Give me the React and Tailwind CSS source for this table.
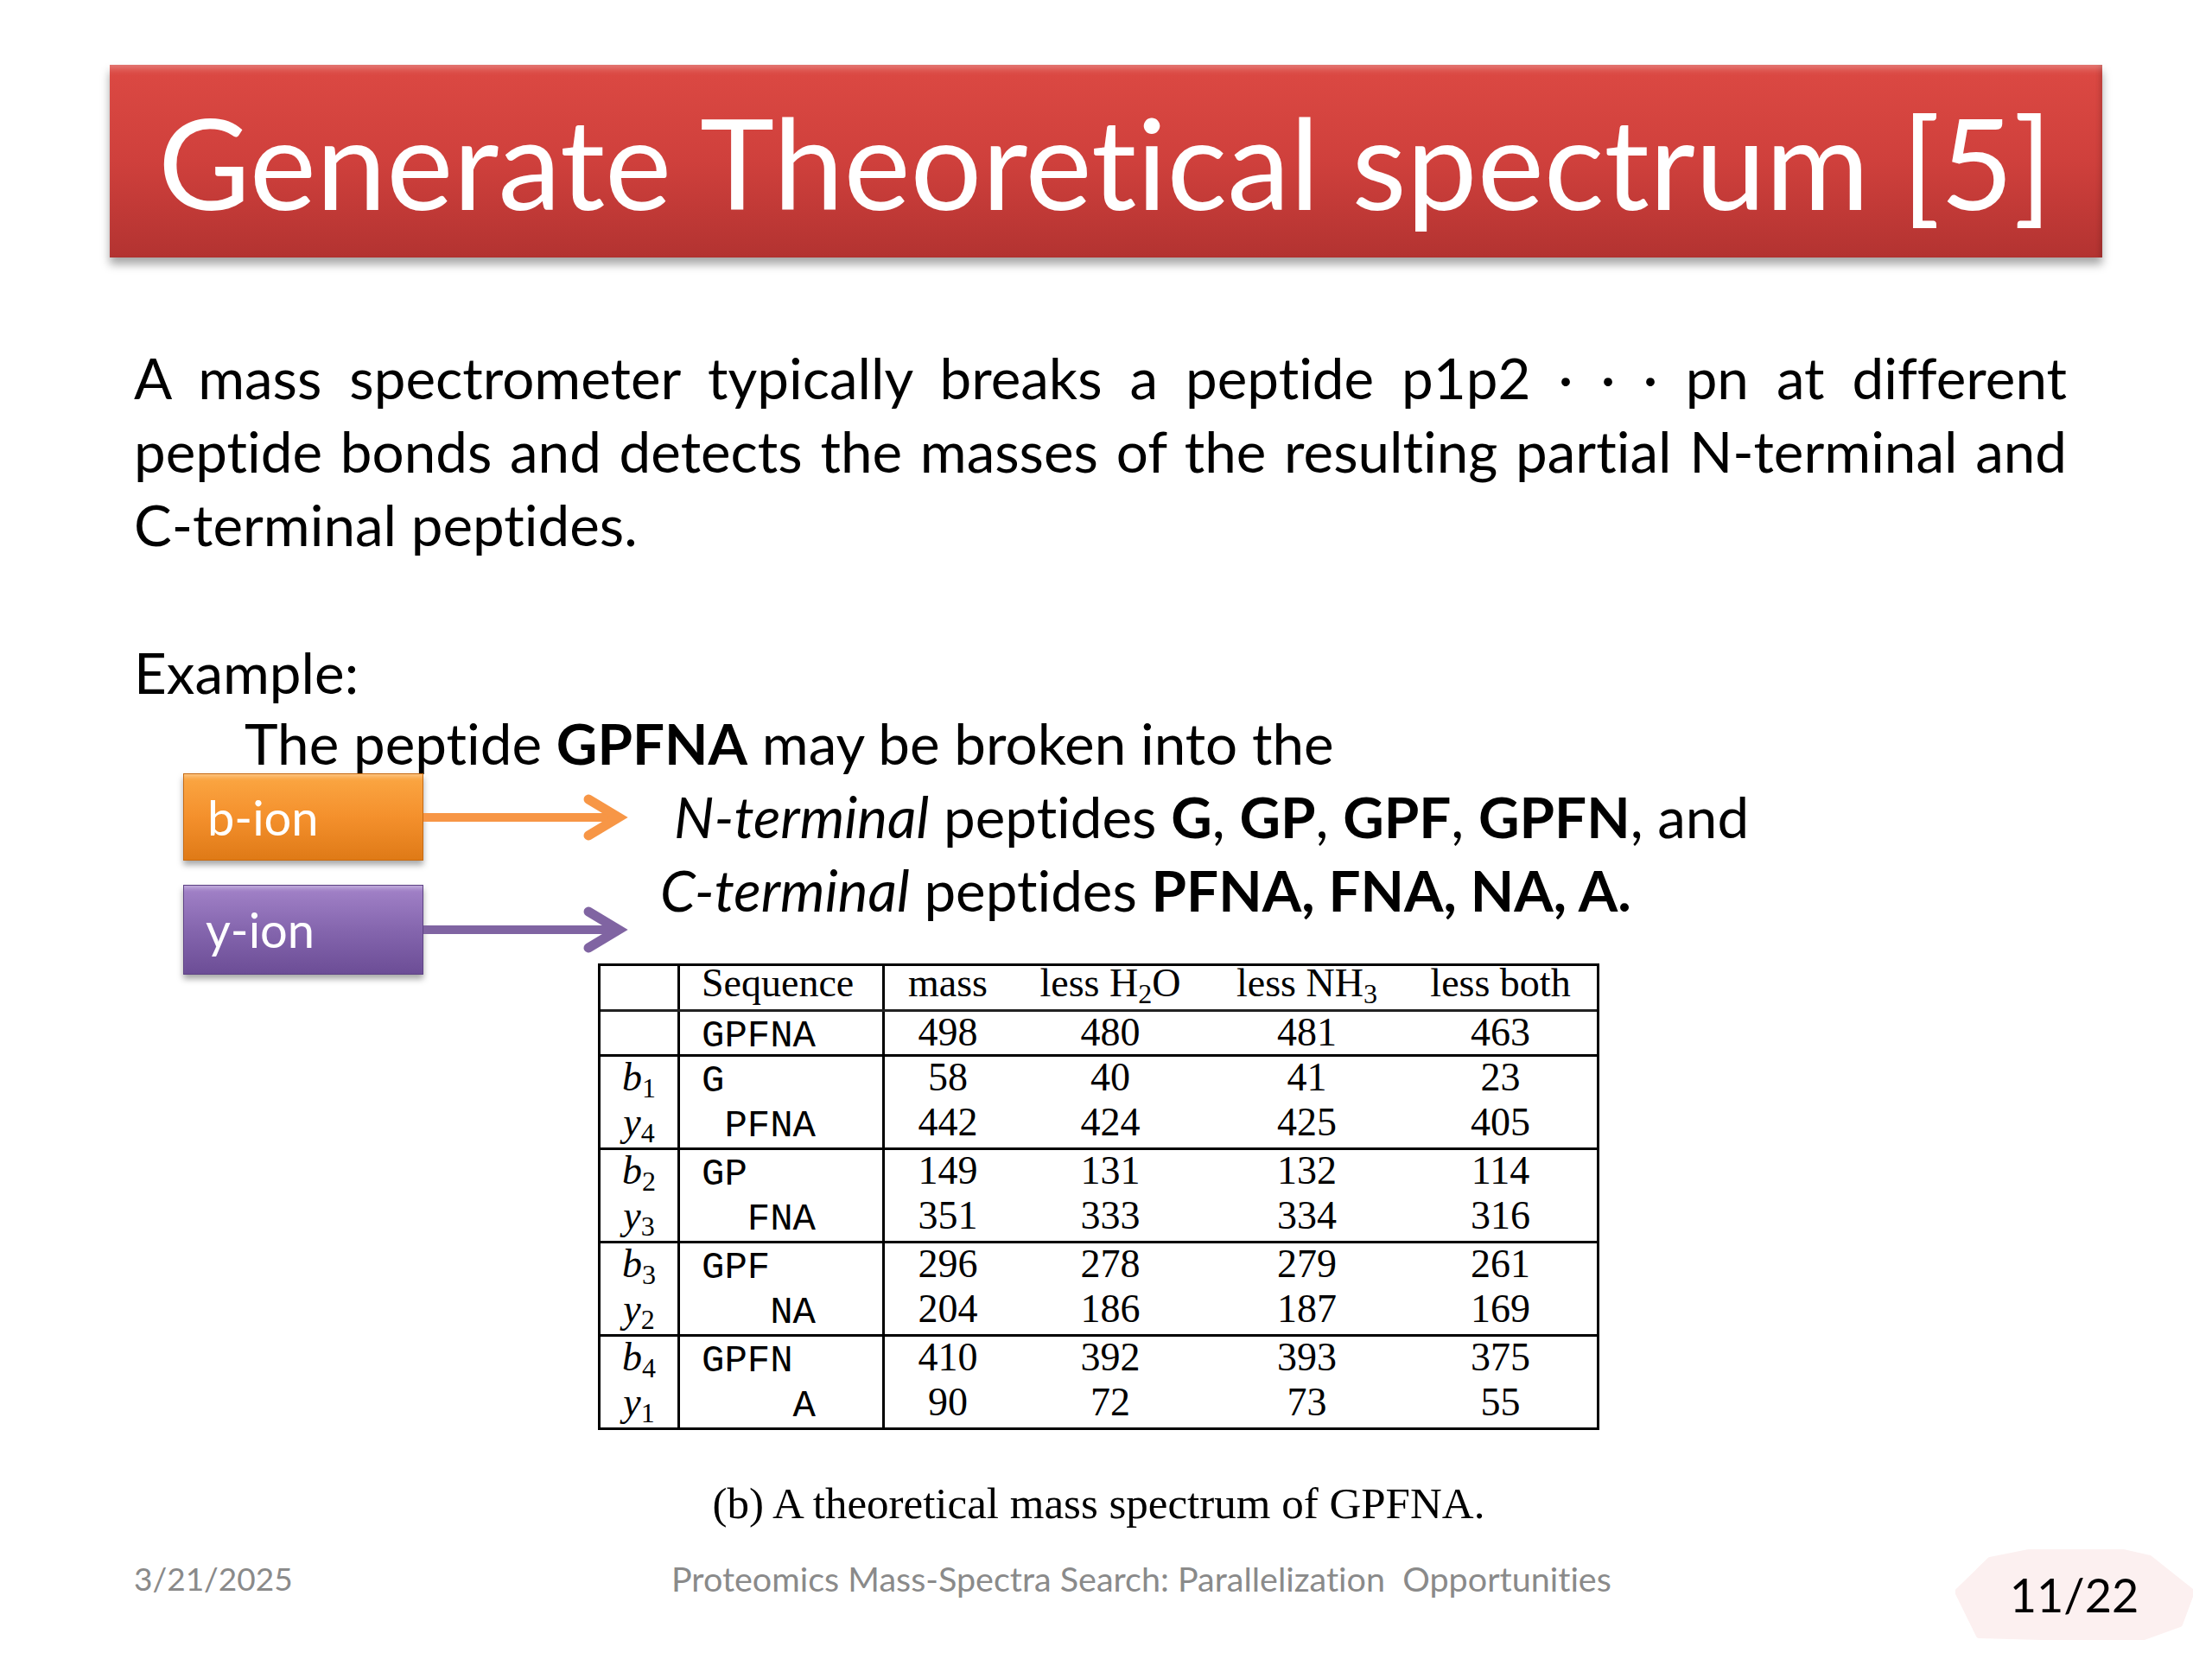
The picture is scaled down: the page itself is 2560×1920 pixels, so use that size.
import React from 'react';

const rows = [
  { label: ['b', '1'], seq: 'G', right: false, v: ['58', '40', '41', '23'] },
  { label: ['y', '4'], seq: 'PFNA', right: true, v: ['442', '424', '425', '405'] },
  { label: ['b', '2'], seq: 'GP', right: false, v: ['149', '131', '132', '114'] },
  { label: ['y', '3'], seq: 'FNA', right: true, v: ['351', '333', '334', '316'] },
  { label: ['b', '3'], seq: 'GPF', right: false, v: ['296', '278', '279', '261'] },
  { label: ['y', '2'], seq: 'NA', right: true, v: ['204', '186', '187', '169'] },
  { label: ['b', '4'], seq: 'GPFN', right: false, v: ['410', '392', '393', '375'] },
  { label: ['y', '1'], seq: 'A', right: true, v: ['90', '72', '73', '55'] },
];

const grid = 'grid grid-cols-[92px_237px_146px_230px_225px_223px]';

const Line = ({ row, h }) => (
  <div className={`${grid} ${h}`}>
    <div className="border-r-[3px] border-black text-center leading-[48px]">
      <i>{row.label[0]}</i>
      <sub className="text-[32px]">{row.label[1]}</sub>
    </div>
    <div className="border-r-[3px] border-black pl-[25px] pt-[4px] leading-[48px] [font-family:'Liberation_Mono',monospace] text-[44px]">
      <span className={`inline-block w-[5ch] ${row.right ? 'text-right' : 'text-left'}`}>{row.seq}</span>
    </div>
    {row.v.map((n, i) => (
      <div key={i} className="text-center leading-[48px]">{n}</div>
    ))}
  </div>
);

const Arrow = ({ color }) => (
  <svg width="236" height="60" viewBox="0 0 236 60" className="shrink-0 overflow-visible">
    <line x1="0" y1="30" x2="226" y2="30" stroke={color} strokeWidth="10" />
    <polyline points="191,9 226,30 191,51" fill="none" stroke={color} strokeWidth="11" strokeLinejoin="miter" strokeLinecap="round" />
  </svg>
);

export default function App() {
  return (
    <div className="w-[2560px] h-[1920px] bg-white flex flex-col [font-family:Lato,sans-serif] [font-variant-ligatures:no-common-ligatures] text-black overflow-hidden">
      {/* title bar */}
      <div className="mt-[75px] ml-[127px] w-[2306px] h-[223px] shrink-0 flex items-center pl-[56px] bg-gradient-to-b from-[#dc4943] via-[#cf403c] to-[#b33331] shadow-[inset_0_10px_8px_-6px_rgba(255,255,255,0.3),inset_-6px_0_6px_-4px_rgba(0,0,0,0.2),0_8px_10px_rgba(0,0,0,0.35)]">
        <h1 className="text-white text-[146px] leading-none">Generate Theoretical spectrum [5]</h1>
      </div>

      {/* paragraph */}
      <div className="mt-[96px] ml-[155px] w-[2237px] text-[65.5px] leading-[85px]">
        <div className="text-justify [text-align-last:justify]">A mass spectrometer typically breaks a peptide p1p2 · · · pn at different</div>
        <div className="text-justify [text-align-last:justify]">peptide bonds and detects the masses of the resulting partial N-terminal and</div>
        <div>C-terminal peptides.</div>
      </div>

      <div className="mt-[89px] ml-[155px] text-[65.5px] leading-[79px]">Example:</div>
      <div className="ml-[283px] text-[65.5px] leading-[85px]">
        The peptide <b>GPFNA</b> may be broken into the
      </div>

      {/* b-ion / y-ion row */}
      <div className="flex">
        <div className="ml-[212px] -mt-[7px] w-[480px] shrink-0 flex flex-col gap-[28px]">
          <div className="flex items-center">
            <div className="w-[278px] h-[101px] shrink-0 flex items-center pl-[27px] text-white text-[56px] leading-none border border-[#c7690f] bg-gradient-to-b from-[#fba743] via-[#f4902c] to-[#df7a16] shadow-[inset_0_6px_5px_-3px_rgba(255,255,255,0.35),0_5px_7px_rgba(0,0,0,0.35)]">
              b-ion
            </div>
            <Arrow color="#f79646" />
          </div>
          <div className="flex items-center">
            <div className="w-[278px] h-[104px] shrink-0 flex items-center pl-[25px] text-white text-[56px] leading-none border border-[#5d4184] bg-gradient-to-b from-[#a383c9] via-[#8566ae] to-[#6c4d96] shadow-[inset_0_6px_5px_-3px_rgba(255,255,255,0.35),0_5px_7px_rgba(0,0,0,0.35)]">
              y-ion
            </div>
            <Arrow color="#8064a2" />
          </div>
        </div>

        <div className="flex flex-col">
          <div className="text-[65.5px] leading-[85px]">
            <div className="pl-[88px]">
              <i>N-terminal</i> peptides <b>G</b>, <b>GP</b>, <b>GPF</b>, <b>GPFN</b>, and
            </div>
            <div className="pl-[72px]">
              <i>C-terminal</i> peptides <b>PFNA, FNA, NA, A.</b>
            </div>
          </div>

          {/* table */}
          <div className="mt-[43px] w-[1159px] border-[3px] border-black [font-family:'Liberation_Serif',serif] text-[46px]">
            <div className={`${grid} h-[53px] border-b-[3px] border-[#222]`}>
              <div className="border-r-[3px] border-black" />
              <div className="border-r-[3px] border-black pl-[25px] leading-[40px]">Sequence</div>
              <div className="text-center leading-[40px]">mass</div>
              <div className="text-center leading-[40px]">less H<sub className="text-[32px]">2</sub>O</div>
              <div className="text-center leading-[40px]">less NH<sub className="text-[32px]">3</sub></div>
              <div className="text-center leading-[40px]">less both</div>
            </div>
            <div className={`${grid} h-[52px] border-b-[3px] border-black`}>
              <div className="border-r-[3px] border-black" />
              <div className="border-r-[3px] border-black pl-[25px] pt-[4px] leading-[48px] [font-family:'Liberation_Mono',monospace] text-[44px]">GPFNA</div>
              {['498', '480', '481', '463'].map((n) => (
                <div key={n} className="text-center leading-[48px]">{n}</div>
              ))}
            </div>
            {[0, 2, 4, 6].map((g) => (
              <div key={g} className={g < 6 ? 'border-b-[3px] border-black' : ''}>
                <Line row={rows[g]} h="h-[52px]" />
                <Line row={rows[g + 1]} h="h-[53px]" />
              </div>
            ))}
          </div>

          <div className="mt-[55px] w-[1159px] text-center [font-family:'Liberation_Serif',serif] text-[51px] leading-[60px]">
            (b) A theoretical mass spectrum of GPFNA.
          </div>
        </div>
      </div>

      {/* footer */}
      <div className="mt-auto mb-[22px] h-[105px] flex items-start">
        <div className="ml-[155px] mt-[15px] w-[622px] shrink-0 text-[37px] leading-none text-[#8a8a8a]">3/21/2025</div>
        <div className="mt-[14px] text-[39.5px] leading-none text-[#8a8a8a] whitespace-pre">Proteomics Mass-Spectra Search: Parallelization  Opportunities</div>
        <div className="ml-auto mr-[22px] relative w-[275px] h-[105px] flex items-center justify-center">
          <svg width="275" height="105" viewBox="0 0 275 105" className="absolute inset-0">
            <polygon points="40,12 90,2 190,2 225,10 274,49 260,87 210,105 27,100 2,49" fill="#fcf0f0" stroke="#fcf0f0" strokeWidth="6" strokeLinejoin="round" />
          </svg>
          <span className="relative text-[54px] leading-none">11/22</span>
        </div>
      </div>
    </div>
  );
}
